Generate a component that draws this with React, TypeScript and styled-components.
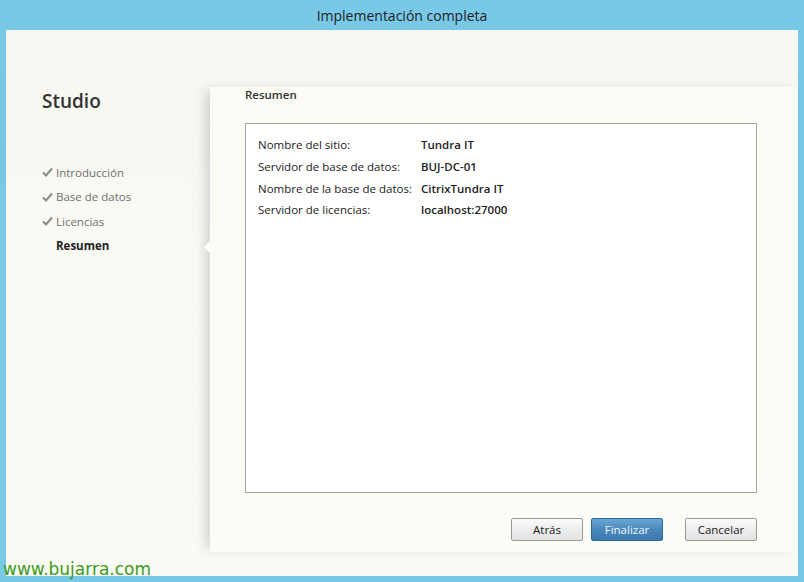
import React from 'react'
import styled, { createGlobalStyle } from 'styled-components'

const GlobalStyle = createGlobalStyle`
  html, body {
    margin: 0;
    padding: 0;
    width: 804px;
    height: 582px;
    overflow: hidden;
    background: #78c8e8;
  }
  #root {
    height: 582px;
  }
`

const Window = styled.div`
  position: relative;
  width: 804px;
  height: 582px;
  background: #78c8e8;
  display: flex;
  flex-direction: column;
  font-family: 'Open Sans', 'Noto Sans', sans-serif;
  color: #222;
`

const TitleBar = styled.div`
  height: 30px;
  display: flex;
  align-items: center;
  justify-content: center;
  font-size: 14px;
  color: #1e1e1e;
`

const Body = styled.div`
  margin: 0 6px;
  height: 546px;
  background: linear-gradient(180deg, #f6f7f0 0%, #f9faf3 40%, #fafbf4 100%);
  display: flex;
`

const Sidebar = styled.div`
  width: 204px;
  padding: 59px 0 0 36px;
  box-sizing: border-box;
  flex-shrink: 0;
`

const Brand = styled.div`
  font-size: 19px;
  font-weight: 600;
  color: #333;
  line-height: 24px;
`

const Steps = styled.ul`
  list-style: none;
  margin: 47px 0 0;
  padding: 0;
`

const Step = styled.li<{ $active?: boolean }>`
  display: flex;
  align-items: center;
  height: 24.5px;
  font-size: 11.5px;
  color: ${(p) => (p.$active ? '#222' : '#707070')};
  font-weight: ${(p) => (p.$active ? 700 : 400)};
  padding-left: ${(p) => (p.$active ? '14px' : '0')};
`

const Check = styled.svg`
  width: 11px;
  height: 10px;
  margin-right: 3px;
`

const Panel = styled.div`
  position: relative;
  flex: 1;
  margin: 57px 0 24px;
  padding: 0 41px 0 35px;
  background: #fbfcf6;
  box-shadow: -8px 0 12px -4px rgba(120, 130, 150, 0.35);
  display: flex;
  flex-direction: column;
`

const Notch = styled.div`
  position: absolute;
  left: -6px;
  top: 154px;
  width: 0;
  height: 0;
  border-top: 6px solid transparent;
  border-bottom: 6px solid transparent;
  border-right: 6px solid #ffffff;
`

const Heading = styled.div`
  font-size: 11.5px;
  font-weight: 600;
  color: #333;
  line-height: 16px;
`

const SummaryBox = styled.div`
  margin-top: 20px;
  height: 370px;
  box-sizing: border-box;
  border: 1px solid #a3a3a3;
  background: #ffffff;
  padding: 10px 12px;
`

const Row = styled.div`
  display: grid;
  grid-template-columns: 163px 1fr;
  height: 21.7px;
  align-items: center;
  font-size: 11.5px;
  color: #222;
`

const Value = styled.span`
  font-weight: 600;
`

const Actions = styled.div`
  display: flex;
  justify-content: flex-end;
  margin-top: 25px;
`

const Button = styled.button<{ $primary?: boolean; $gap?: number }>`
  width: 72px;
  height: 23px;
  margin-left: ${(p) => p.$gap ?? 0}px;
  font-family: inherit;
  font-size: 11.5px;
  border-radius: 2px;
  cursor: pointer;
  border: 1px solid ${(p) => (p.$primary ? '#2d6a9c' : '#9a9a9a')};
  color: ${(p) => (p.$primary ? '#eef6ff' : '#222')};
  background: ${(p) =>
    p.$primary
      ? 'linear-gradient(180deg, #6aa5d2 0%, #4a88bd 50%, #3a78ad 100%)'
      : 'linear-gradient(180deg, #fbfbfb 0%, #ededed 50%, #e2e2e2 100%)'};
`

const Watermark = styled.div`
  position: absolute;
  left: 3px;
  bottom: 3px;
  font-family: 'DejaVu Sans', Verdana, sans-serif;
  font-size: 17px;
  color: #3d9a1c;
`

const summary = [
  ['Nombre del sitio:', 'Tundra IT'],
  ['Servidor de base de datos:', 'BUJ-DC-01'],
  ['Nombre de la base de datos:', 'CitrixTundra IT'],
  ['Servidor de licencias:', 'localhost:27000'],
]

const done = ['Introducción', 'Base de datos', 'Licencias']

const CheckIcon = () => (
  <Check viewBox="0 0 11 10">
    <path d="M1 5.5 L4 8.5 L10 1.5" stroke="#8a8a8a" strokeWidth="2" fill="none" />
  </Check>
)

export default function App() {
  return (
    <Window>
      <GlobalStyle />
      <TitleBar>Implementación completa</TitleBar>
      <Body>
        <Sidebar>
          <Brand>Studio</Brand>
          <Steps>
            {done.map((s) => (
              <Step key={s}>
                <CheckIcon />
                {s}
              </Step>
            ))}
            <Step $active>Resumen</Step>
          </Steps>
        </Sidebar>
        <Panel>
          <Notch />
          <Heading>Resumen</Heading>
          <SummaryBox>
            {summary.map(([k, v]) => (
              <Row key={k}>
                <span>{k}</span>
                <Value>{v}</Value>
              </Row>
            ))}
          </SummaryBox>
          <Actions>
            <Button>Atrás</Button>
            <Button $primary $gap={8}>
              Finalizar
            </Button>
            <Button $gap={22}>Cancelar</Button>
          </Actions>
        </Panel>
      </Body>
      <Watermark>www.bujarra.com</Watermark>
    </Window>
  )
}
